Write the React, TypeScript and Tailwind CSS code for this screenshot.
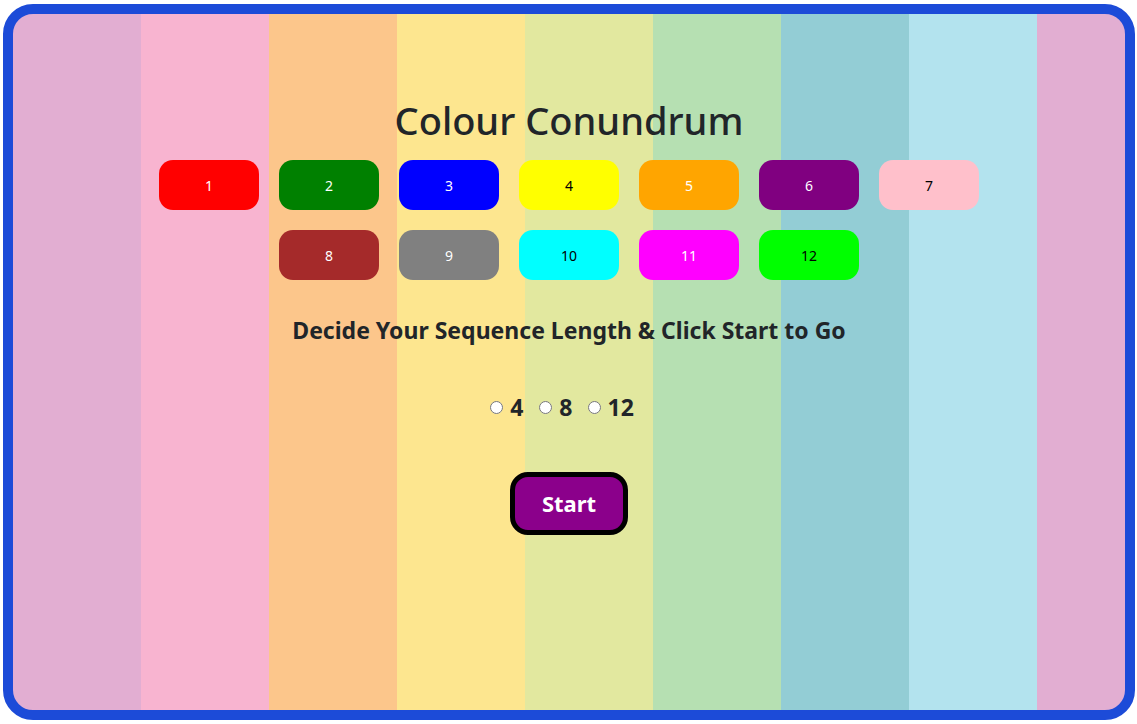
import React from "react";

const buttons: { n: number; bg: string; fg: string }[] = [
  { n: 1, bg: "bg-[#ff0000]", fg: "text-white" },
  { n: 2, bg: "bg-[#008000]", fg: "text-white" },
  { n: 3, bg: "bg-[#0000ff]", fg: "text-white" },
  { n: 4, bg: "bg-[#ffff00]", fg: "text-black" },
  { n: 5, bg: "bg-[#ffa500]", fg: "text-white" },
  { n: 6, bg: "bg-[#800080]", fg: "text-white" },
  { n: 7, bg: "bg-[#ffc0cb]", fg: "text-black" },
  { n: 8, bg: "bg-[#a52a2a]", fg: "text-white" },
  { n: 9, bg: "bg-[#808080]", fg: "text-white" },
  { n: 10, bg: "bg-[#00ffff]", fg: "text-black" },
  { n: 11, bg: "bg-[#ff00ff]", fg: "text-white" },
  { n: 12, bg: "bg-[#00ff00]", fg: "text-black" },
];

export default function App() {
  return (
    <div className="h-[724px] w-[1137px] bg-white pl-[3px] pr-[2px] pt-[4px] pb-[4px] font-['Noto_Sans',sans-serif] text-[#212529]">
      <div className="h-full w-full rounded-[30px] border-[10px] border-[#1c4bd8] overflow-hidden bg-[linear-gradient(to_right,#e2aed2_0px,#e2aed2_128px,#f8b4d0_128px,#f8b4d0_256px,#fcc68b_256px,#fcc68b_384px,#fde68f_384px,#fde68f_512px,#e2e89f_512px,#e2e89f_640px,#b6e0b2_640px,#b6e0b2_768px,#93cdd5_768px,#93cdd5_896px,#b3e3ee_896px,#b3e3ee_1024px,#e2aed2_1024px,#e2aed2_100%)]">
        <div className="flex flex-col items-center pt-[82px]">
          <h1 className="text-[38px] leading-[48px] font-medium">Colour Conundrum</h1>
          <div className="mt-[16px] flex w-[840px] flex-wrap justify-center gap-[20px]">
            {buttons.map((b) => (
              <button
                key={b.n}
                className={`h-[50px] w-[100px] rounded-[14px] text-[14px] ${b.bg} ${b.fg}`}
              >
                {b.n}
              </button>
            ))}
          </div>
          <h2 className="mt-[35px] text-[23px] leading-[30px] font-bold">
            Decide Your Sequence Length &amp; Click Start to Go
          </h2>
          <div className="mt-[47px] mr-[17px] flex items-center text-[23px] leading-[30px] font-bold">
            <label className="flex items-center">
              <input type="radio" name="len" className="m-[3px] mr-[7px] h-[13px] w-[13px]" />
              4
            </label>
            <label className="ml-[13px] flex items-center">
              <input type="radio" name="len" className="m-[3px] mr-[7px] h-[13px] w-[13px]" />
              8
            </label>
            <label className="ml-[12px] flex items-center">
              <input type="radio" name="len" className="m-[3px] mr-[7px] h-[13px] w-[13px]" />
              12
            </label>
          </div>
          <button className="mt-[50px] h-[63px] w-[118px] rounded-[18px] border-[5px] border-black bg-[#8b008b] text-[22px] font-bold text-white">
            Start
          </button>
        </div>
      </div>
    </div>
  );
}
